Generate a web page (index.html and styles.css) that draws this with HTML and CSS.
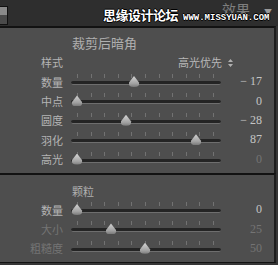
FILE: index.html
```html
<!DOCTYPE html>
<html lang="zh-CN">
<head>
  <meta charset="UTF-8">
  <title>效果</title>
  <link rel="stylesheet" href="styles.css">
</head>
<body>

<!-- HEADER -->
<div class="header">
  <span class="switch"></span>
  <span class="header-title">效果</span>
  <span class="header-arrow">▼</span>
  <div class="watermark">
    <span class="wm-cn">思缘设计论坛</span>
    <span class="wm-en">WWW.MISSYUAN.COM</span>
  </div>
</div>

<!-- POST-CROP VIGNETTE -->
<div class="panel panel-vignette">
  <div class="panel-title">裁剪后暗角</div>

  <div class="row">
    <span class="label">样式</span>
    <span class="select">高光优先
      <svg class="updown" width="5" height="8" viewBox="0 0 5 8"><path d="M2.5 0 L5 3 L0 3 Z M2.5 8 L5 5 L0 5 Z" fill="#b0b0b0"/></svg>
    </span>
  </div>

  <div class="row">
    <span class="label">数量</span>
    <div class="slider"><span class="thumb" style="--pos:63px"></span></div>
    <span class="value">− 17</span>
  </div>
  <div class="row">
    <span class="label">中点</span>
    <div class="slider"><span class="thumb" style="--pos:6px"></span></div>
    <span class="value">0</span>
  </div>
  <div class="row">
    <span class="label">圆度</span>
    <div class="slider"><span class="thumb" style="--pos:55px"></span></div>
    <span class="value">− 28</span>
  </div>
  <div class="row">
    <span class="label">羽化</span>
    <div class="slider"><span class="thumb" style="--pos:125px"></span></div>
    <span class="value">87</span>
  </div>
  <div class="row">
    <span class="label">高光</span>
    <div class="slider"><span class="thumb" style="--pos:6px"></span></div>
    <span class="value dim">0</span>
  </div>
</div>

<!-- GRAIN -->
<div class="panel panel-grain">
  <div class="panel-title small">颗粒</div>

  <div class="row">
    <span class="label">数量</span>
    <div class="slider"><span class="thumb" style="--pos:6px"></span></div>
    <span class="value">0</span>
  </div>
  <div class="row">
    <span class="label dim">大小</span>
    <div class="slider"><span class="thumb" style="--pos:40px"></span></div>
    <span class="value dim">25</span>
  </div>
  <div class="row">
    <span class="label dim">粗糙度</span>
    <div class="slider"><span class="thumb" style="--pos:74px"></span></div>
    <span class="value dim">50</span>
  </div>
</div>

</body>
</html>
```

FILE: styles.css
```css
/* --- Global --- */
body {
  margin: 0;
  width: 278px;
  height: 265px;
  background: #363636;
  font-family: "Noto Sans CJK SC", "Liberation Sans", sans-serif;
  color: #b4b4b4;
  overflow: hidden;
}

/* --- Header --- */
.header {
  position: relative;
  height: 26px;
  background: #2e2e2e;
  display: flex;
  align-items: center;
}
.switch {
  width: 7px;
  height: 17px;
  margin-top: 4px;
  border: 1px solid #111;
  border-left: none;
  background: linear-gradient(to bottom, #8a8a8a 0 45%, #4a4a4a 45% 100%);
}
.header-title {
  margin-left: 214px;
  margin-top: -8px;
  font-size: 14px;
  color: #7e7e7e;
}
.header-arrow {
  margin-left: 14px;
  margin-top: -3px;
  font-size: 8px;
  color: #9a9a9a;
}

/* watermark lies over the header */
.watermark {
  position: absolute;
  left: 103px;
  top: 7px;
  display: flex;
  align-items: baseline;
  gap: 5px;
  color: #fff;
  text-shadow: -1px 0 #000, 1px 0 #000, 0 -1px #000, 0 1px #000;
}
.wm-cn { font-size: 13px; font-weight: bold; line-height: 16px; letter-spacing: -0.5px; }
.wm-en { font-family: "Liberation Mono", monospace; font-size: 9px; font-weight: bold; }

/* --- Panels --- */
.panel {
  width: 274px;
  background: #4e4e4e;
  border-top: 2px solid #121212;
  border-right: 2px solid #1d1d1d;
}
.panel-vignette { height: 145px; }
.panel-grain { height: 87px; border-bottom: 1px solid #121212; }

.panel-title {
  padding: 6px 0 0 72px;
  height: 18px;
  line-height: 18px;
  font-size: 13px;
  color: #b0b0b0;
}
.panel-title.small { padding-top: 8px; height: 17px; line-height: 17px; font-size: 11px; }
.panel-vignette .row:nth-child(2) { height: 20px; }

/* --- Rows --- */
.row {
  display: grid;
  grid-template-columns: 63px 150px 1fr;
  column-gap: 8px;
  align-items: center;
  height: 19.4px;
  font-size: 11px;
}
.label { text-align: right; }
.value {
  text-align: right;
  padding-right: 12px;
  font-family: "Liberation Serif", serif;
  font-size: 12px;
  color: #c4c4c4;
}
.dim { color: #747474; }

.select {
  grid-column: 2 / 4;
  padding-left: 107px;
  display: flex;
  align-items: center;
  gap: 6px;
  color: #b8b8b8;
}
.updown { margin-top: 2px; }

/* --- Slider --- */
.slider {
  position: relative;
  height: 100%;
}
.slider::before {
  content: "";
  position: absolute;
  left: 6px;
  top: 2px;
  width: 137px;
  height: 4px;
  background: repeating-linear-gradient(to right, #727272 0 1px, transparent 1px 13.6px);
}
.slider::after {
  content: "";
  position: absolute;
  left: 0;
  right: 0;
  top: 9px;
  height: 3px;
  background: #242424;
  border-bottom: 1px solid #6e6e6e;
  border-radius: 3px;
}
.thumb {
  position: absolute;
  z-index: 1;
  left: calc(var(--pos) - 5.5px);
  top: 4px;
  width: 11px;
  height: 11px;
  background: linear-gradient(to bottom, #d4d4d4, #a0a0a0 70%, #7a7a7a);
  clip-path: path("M5.5 0 L10.5 6.5 Q11.5 11 5.5 11 Q-0.5 11 0.5 6.5 Z");
}
```
